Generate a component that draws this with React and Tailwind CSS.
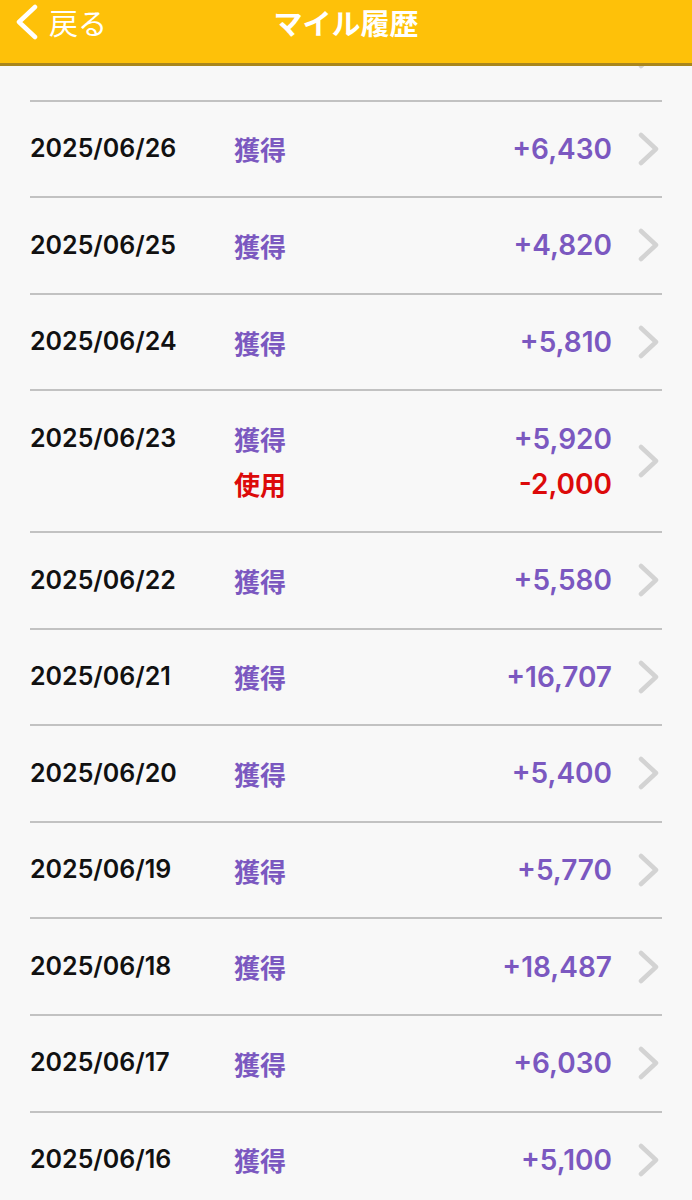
import React from "react";

const rows = [
  { date: "2025/06/26", items: [{ type: "獲得", amount: "+6,430" }] },
  { date: "2025/06/25", items: [{ type: "獲得", amount: "+4,820" }] },
  { date: "2025/06/24", items: [{ type: "獲得", amount: "+5,810" }] },
  {
    date: "2025/06/23",
    items: [
      { type: "獲得", amount: "+5,920" },
      { type: "使用", amount: "-2,000", used: true },
    ],
  },
  { date: "2025/06/22", items: [{ type: "獲得", amount: "+5,580" }] },
  { date: "2025/06/21", items: [{ type: "獲得", amount: "+16,707" }] },
  { date: "2025/06/20", items: [{ type: "獲得", amount: "+5,400" }] },
  { date: "2025/06/19", items: [{ type: "獲得", amount: "+5,770" }] },
  { date: "2025/06/18", items: [{ type: "獲得", amount: "+18,487" }] },
  { date: "2025/06/17", items: [{ type: "獲得", amount: "+6,030" }] },
  { date: "2025/06/16", items: [{ type: "獲得", amount: "+5,100" }] },
];

const latin = "font-['Inter','Noto_Sans_CJK_JP',sans-serif]";
const cjk = "font-['Noto_Sans_CJK_JP',sans-serif]";

function RowChevron() {
  return (
    <svg width="23" height="34" viewBox="0 0 23 34" className="ml-[25px] mr-[2px] shrink-0">
      <path d="M4 3 L19 17 L4 31" fill="none" stroke="#d3d3d3" strokeWidth="4.5" strokeLinecap="round" strokeLinejoin="round" />
    </svg>
  );
}

function HistoryRow({ row, hidden }) {
  return (
    <div className="flex items-center py-[24.8px] border-b-2 border-[#c2c2c2]">
      <div className={`flex-1 flex items-start ${hidden ? "invisible" : ""}`}>
        <div className={`w-[204px] h-[45px] flex items-center text-[25px] font-semibold text-[#111] ${latin}`}>
          {row.date}
        </div>
        <div className="flex-1">
          {row.items.map((it, i) => (
            <div key={i} className="h-[45px] flex items-center justify-between">
              <span
                className={`text-[26px] font-bold ${cjk} ${it.used ? "text-[#dc0a0a]" : "text-[#7b58c0]"}`}
              >
                {it.type}
              </span>
              <span
                className={`text-[28px] font-semibold ${latin} ${it.used ? "text-[#dc0a0a]" : "text-[#7b58c0]"}`}
              >
                {it.amount}
              </span>
            </div>
          ))}
        </div>
      </div>
      <RowChevron />
    </div>
  );
}

export default function App() {
  return (
    <div className="w-[692px] h-[1200px] overflow-hidden bg-[#f8f8f8]">
      <div className="sticky top-0 z-10 h-[66px] bg-[#fec109] border-b-[3px] border-[#a9861c] flex items-start pt-[4px]">
        <div className="flex items-center pl-[13px] w-[200px]">
          <svg width="28" height="36" viewBox="0 0 28 36" className="shrink-0">
            <path d="M22 3 L6 18 L22 33" fill="none" stroke="#fff" strokeWidth="4.5" strokeLinecap="round" strokeLinejoin="round" />
          </svg>
          <span className={`ml-[8px] text-[29px] leading-[36px] text-white ${cjk}`}>戻る</span>
        </div>
        <div className={`w-[292px] text-center text-[29px] leading-[36px] font-bold text-white ${cjk}`}>マイル履歴</div>
      </div>

      <div className="-mt-[61px] mx-[30px]">
        <HistoryRow hidden row={{ date: "2025/06/27", items: [{ type: "獲得", amount: "+5,000" }] }} />
        {rows.map((r) => (
          <HistoryRow key={r.date} row={r} />
        ))}
      </div>
    </div>
  );
}
